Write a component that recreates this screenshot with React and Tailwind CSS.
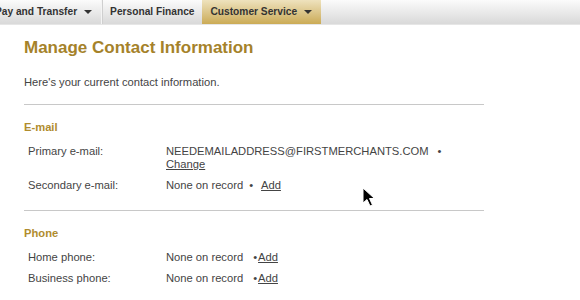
import React from "react";

const Caret = () => (
  <span className="inline-block ml-[7px] w-0 h-0 border-l-[4px] border-r-[4px] border-t-[4px] border-l-transparent border-r-transparent border-t-[#333] align-middle" />
);

const Row = ({ label, children }) => (
  <div className="flex">
    <div className="w-[142px] pl-1 shrink-0">{label}</div>
    <div>{children}</div>
  </div>
);

const App = () => {
  return (
    <div
      className="w-[580px] h-[300px] bg-white overflow-hidden text-[11.2px] text-[#444] relative"
      style={{ fontFamily: '"Liberation Sans", Arial, sans-serif' }}
    >
      {/* top nav */}
      <div className="h-[25px] flex items-stretch bg-gradient-to-b from-[#fbfbfb] to-[#d9d9d9] border-b border-[#e6e6e6] font-bold text-[#333] text-[10.2px]">
        <div className="flex items-center ml-[-5px] pr-[9px] border-r border-[#f4f4f4]">
          Pay and Transfer
          <Caret />
        </div>
        <div className="flex items-center pl-[7px] pr-[7px] border-l border-[#cfcfcf]">
          Personal Finance
        </div>
        <div className="flex items-center pl-[8px] pr-[9px] ml-[1px] bg-gradient-to-b from-[#eee2bd] to-[#cbab55]">
          Customer Service
          <Caret />
        </div>
      </div>

      <div className="pl-[24px] w-[484px]">
        <h1 className="mt-[12px] text-[17px] leading-[22px] font-bold text-[#a5822a]">
          Manage Contact Information
        </h1>
        <p className="mt-[16px] leading-[14px] text-[#444]">
          Here's your current contact information.
        </p>
        <div className="mt-[15px] border-t border-[#c8c8c8]" />

        <h2 className="mt-[15px] font-bold text-[#b08c2e] leading-[14px]">E-mail</h2>
        <div className="mt-[11px] leading-[13px] flex flex-col gap-[8px]">
          <Row label="Primary e-mail:">
            <div className="flex">
              <span>NEEDEMAILADDRESS@FIRSTMERCHANTS.COM</span>
              <span className="ml-[9px]">•</span>
            </div>
            <a className="underline text-[#444]">Change</a>
          </Row>
          <Row label="Secondary e-mail:">
            None on record<span className="ml-[6px] mr-[8px]">•</span>
            <a className="underline">Add</a>
          </Row>
        </div>
        <div className="mt-[18px] border-t border-[#c8c8c8]" />

        <h2 className="mt-[15px] font-bold text-[#b08c2e] leading-[14px]">Phone</h2>
        <div className="mt-[11px] leading-[13px] flex flex-col gap-[8px]">
          <Row label="Home phone:">
            None on record<span className="ml-[10px] mr-[1px]">•</span>
            <a className="underline">Add</a>
          </Row>
          <Row label="Business phone:">
            None on record<span className="ml-[10px] mr-[1px]">•</span>
            <a className="underline">Add</a>
          </Row>
        </div>
      </div>

      {/* mouse cursor over content */}
      <svg className="absolute left-[362px] top-[187px]" width="16" height="22" viewBox="0 0 16 22">
        <path d="M1 1 L1 16 L5 12.5 L8 19 L10.5 18 L7.5 11.5 L12.5 11.5 Z" fill="#000" stroke="#fff" strokeWidth="1" />
      </svg>
    </div>
  );
};

export default App;
